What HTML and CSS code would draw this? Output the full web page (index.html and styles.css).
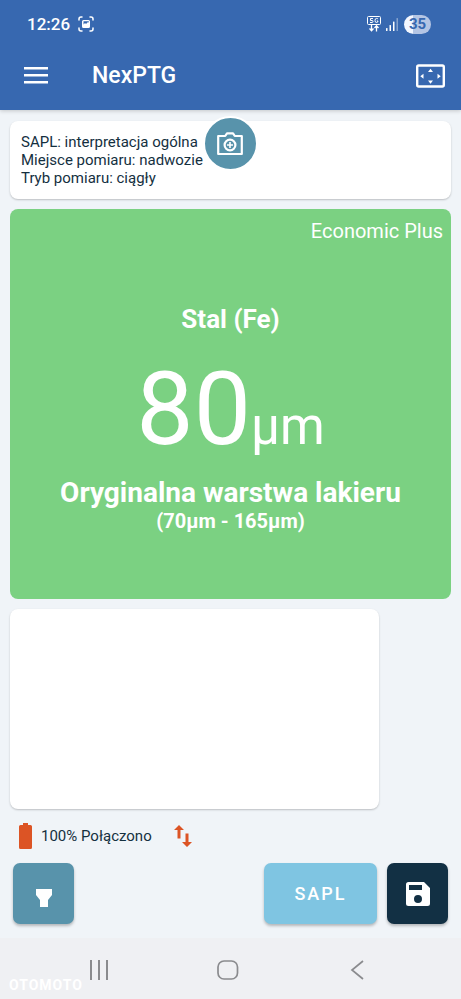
FILE: index.html
```html
<!DOCTYPE html>
<html lang="pl">
<head>
<meta charset="utf-8">
<meta name="viewport" content="width=device-width, initial-scale=1">
<title>NexPTG</title>
<link rel="stylesheet" href="styles.css">
</head>
<body>
<div class="app">
  <header class="header">
    <div class="status">
      <span class="clock">12:26</span>
      <svg class="capture" width="16" height="16" viewBox="0 0 16 16" fill="none" stroke="currentColor" stroke-width="1.500" stroke-linecap="round" aria-hidden="true">
        <path d="M1 4V3a2 2 0 0 1 2-2h1M12 1h1a2 2 0 0 1 2 2v1M15 12v1a2 2 0 0 1-2 2h-1M4 15H3a2 2 0 0 1-2-2v-1"/>
        <path d="M5.500 4h5A1.500 1.500 0 0 1 12 5.500v5a1.500 1.500 0 0 1-1.500 1.500h-5A1.500 1.500 0 0 1 4 10.500v-5A1.500 1.500 0 0 1 5.500 4zM5.500 8.500l1.500-1.500 1 1 2-2 .8.800V5.300h-5.300z" fill="currentColor" fill-rule="evenodd" stroke="none"/>
      </svg>
      <span class="spacer"></span>
      <svg width="14" height="16" viewBox="0 0 14 16" fill="none" stroke="currentColor" aria-hidden="true">
        <rect x=".5" y=".5" width="13" height="8" rx="1"/>
        <path d="M6 2.500H3.500v2h1.500q1 0 1 1t-1 1H3M11 3q-.5-.6-1.500-.6Q8 2.400 8 4.500t1.500 2q1.500 0 1.500-1.500H9.800"/>
        <path d="M4.500 9v6M2.500 12.500l2 2.200 2-2.200M9.500 15.500V10M7.500 12l2-2.200 2 2.200" stroke-width="1.300"/>
      </svg>
      <svg class="signal" width="13" height="13" viewBox="0 0 13 13" fill="currentColor" aria-hidden="true">
        <rect x="0" y="10" width="1.500" height="3" rx=".5"/>
        <rect x="3.500" y="7" width="1.500" height="6" rx=".5"/>
        <rect x="7" y="3.500" width="1.500" height="9.500" rx=".5"/>
        <rect x="10.500" y="0" width="1.500" height="13" rx=".5" opacity=".4"/>
      </svg>
      <span class="level">35</span>
    </div>
    <div class="toolbar">
      <button class="icon-button" type="button" aria-label="Menu">
        <svg width="24" height="18" viewBox="0 0 24 18" fill="currentColor" aria-hidden="true"><path d="M0 0h24v2.500H0zM0 7h24v2.500H0zM0 14h24v2.500H0z"/></svg>
      </button>
      <h1 class="title">NexPTG</h1>
      <button class="icon-button" type="button" aria-label="Pełny ekran">
        <svg width="30" height="24" viewBox="0 0 30 24" aria-hidden="true">
          <rect x="2.200" y="1.500" width="26.600" height="21" rx="1.500" fill="none" stroke="currentColor" stroke-width="2.400"/>
          <path d="M13 8h5l-2.500-3.300zM13 16.500h5l-2.500 3.300zM8.500 9.700v5L5.300 12.200zM22.500 9.700v5l3.200-2.500z" fill="currentColor"/>
        </svg>
      </button>
    </div>
  </header>

  <main class="content">
    <section class="card info">
      <p>SAPL: interpretacja ogólna</p>
      <p>Miejsce pomiaru: nadwozie</p>
      <p>Tryb pomiaru: ciągły</p>
      <button class="camera" type="button" aria-label="Zrób zdjęcie">
        <svg width="26" height="24" viewBox="0 0 26 24" fill="none" stroke="currentColor" stroke-width="2.200" aria-hidden="true">
          <path d="M1.200 4h7l1.800-2.700h6L17.800 4h7v18H1.200z" stroke-linejoin="round"/>
          <circle cx="13" cy="13" r="5.400"/>
          <path d="M13 10v6M10 13h6" stroke-width="1.600"/>
        </svg>
      </button>
    </section>

    <section class="result">
      <p class="device">Economic Plus</p>
      <h2 class="material">Stal (Fe)</h2>
      <p class="reading">80<span class="unit">µm</span></p>
      <p class="verdict">Oryginalna warstwa lakieru</p>
      <p class="range">(70µm - 165µm)</p>
    </section>

    <section class="card history" aria-label="Historia"></section>

    <div class="connection">
      <svg width="14" height="26" viewBox="0 0 14 26" fill="currentColor" aria-hidden="true"><path d="M4 0h5v2h2.500A1.500 1.500 0 0 1 13 3.500v21a1.500 1.500 0 0 1-1.500 1.500h-10A1.500 1.500 0 0 1 0 24.500v-21A1.500 1.500 0 0 1 1.500 2H4z"/></svg>
      <span class="state">100% Połączono</span>
      <svg width="18" height="24" viewBox="0 0 18 24" fill="currentColor" aria-hidden="true"><path d="M5 1l5 5H6.500v8.500h-3V6H0zM13 23l-5-5h3.500V9.500h3V18H18z"/></svg>
    </div>

    <div class="actions">
      <button class="action lamp" type="button" aria-label="Latarka">
        <svg width="16" height="18" viewBox="0 0 16 18" fill="currentColor" aria-hidden="true"><path d="M0 0h16v6l-4 5v7H4v-7L0 6z"/></svg>
      </button>
      <button class="action sapl" type="button">SAPL</button>
      <button class="action save" type="button" aria-label="Zapisz">
        <svg width="24" height="24" viewBox="0 0 24 24" fill="currentColor" fill-rule="evenodd" aria-hidden="true"><path d="M2.500 0H18l6 6v15.500a2.500 2.500 0 0 1-2.500 2.500h-19A2.500 2.500 0 0 1 0 21.500v-19A2.500 2.500 0 0 1 2.500 0zM3 3v5h13V3zM12 13a4 4 0 1 0 0 8 4 4 0 0 0 0-8z"/></svg>
      </button>
    </div>
  </main>

  <nav class="system">
    <span class="watermark">OTOMOTO</span>
    <button class="key" type="button" aria-label="Ostatnie"><svg width="20" height="20" viewBox="0 0 20 20" fill="none" stroke="currentColor" stroke-width="2" aria-hidden="true"><path d="M2 0v20M10 0v20M18 0v20"/></svg></button>
    <button class="key" type="button" aria-label="Ekran główny"><svg width="22" height="20" viewBox="0 0 22 20" fill="none" stroke="currentColor" stroke-width="1.700" aria-hidden="true"><rect x="1" y="1" width="19.500" height="18" rx="6"/></svg></button>
    <button class="key" type="button" aria-label="Wstecz"><svg width="14" height="20" viewBox="0 0 14 20" fill="none" stroke="currentColor" stroke-width="1.700" aria-hidden="true"><path d="M13 1L2 10l11 9"/></svg></button>
  </nav>
</div>
</body>
</html>
```
FILE: styles.css
```css
* { box-sizing: border-box; }

body {
  margin: 0;
  background: #f0f4f8;
  color: #14303f;
  font-family: Roboto, "Liberation Sans", sans-serif;
}

h1, h2, p { margin: 0; }

svg { display: block; flex: none; }

button {
  border: 0;
  padding: 0;
  background: none;
  color: inherit;
  font: inherit;
  display: flex;
  align-items: center;
  justify-content: center;
}

.app {
  min-height: 100vh;
  display: flex;
  flex-direction: column;
}

.header {
  background: #3768b0;
  color: #fff;
  padding-bottom: 10px;
  box-shadow: 0 1px 4px #00000030;
}

.status {
  display: flex;
  align-items: center;
  padding: 14px 30px 0 27px;
}

.clock { font-size: 17px; line-height: 20px; font-weight: 500; }
.capture { margin-left: 8px; }
.spacer { flex: 1; }
.signal { margin: 0 5px; }

.level {
  width: 27px;
  border-radius: 10px;
  background: linear-gradient(90deg, #f3f7ff 35%, #b4c5e4 35%);
  color: #3768b0;
  font-size: 15px;
  line-height: 19px;
  font-weight: 700;
  text-align: center;
}

.toolbar {
  display: flex;
  align-items: center;
  padding: 18px 16px 0 24px;
}

.icon-button { height: 48px; }

.title {
  flex: 1;
  margin-left: 44px;
  font-size: 23px;
  line-height: 28px;
  font-weight: 500;
}

.content {
  flex: 1;
  display: flex;
  flex-direction: column;
  padding: 11px 10px 14px;
}

.card {
  background: #fff;
  border-radius: 8px;
  box-shadow: 0 1px 2px #00000038;
}

.info {
  position: relative;
  padding: 12px 11px;
  font-size: 15px;
  line-height: 18px;
}

.camera {
  position: absolute;
  left: 50%;
  top: -5px;
  width: 55px;
  height: 55px;
  margin-left: -28px;
  border: 2px solid #fff;
  border-radius: 50%;
  background: #5893ab;
  color: #fff;
}

.result {
  flex: 1;
  margin: 10px 0;
  padding: 10px 8px;
  border-radius: 8px;
  background: #7bd182;
  color: #fff;
  text-align: center;
}

.device { font-size: 20px; line-height: 24px; text-align: right; }
.material { margin-top: 60px; font-size: 26px; line-height: 32px; font-weight: 700; }
.reading { margin-top: 12px; font-size: 102px; line-height: 124px; }
.unit { font-size: 51px; line-height: 60px; }
.verdict { margin-top: 6px; font-size: 28px; line-height: 32px; font-weight: 700; }
.range { font-size: 20px; line-height: 24px; font-weight: 700; }

.history { height: 200px; margin-right: 72px; }

.connection {
  display: flex;
  align-items: center;
  height: 54px;
  padding-left: 9px;
  color: #dc5425;
}

.state {
  margin: 0 22px 0 8px;
  color: #14303f;
  font-size: 15px;
  line-height: 18px;
}

.actions {
  display: flex;
  gap: 10px;
  padding: 0 3px;
}

.action {
  width: 61px;
  height: 61px;
  border-radius: 7px;
  color: #fff;
  box-shadow: 0 2px 3px #00000040;
}

.lamp { background: #5893ab; padding-top: 8px; }
.save { background: #123044; }

.sapl {
  width: 113px;
  margin-left: auto;
  background: #7fc5e2;
  font-size: 18px;
  font-weight: 500;
  letter-spacing: 2px;
}

.system {
  position: relative;
  display: flex;
  justify-content: space-around;
  padding: 2px 40px 0 34px;
  background: #eff0f3;
  color: #8a8b8e;
}

.key { height: 59px; width: 64px; }

.watermark {
  position: absolute;
  left: 9px;
  bottom: 6px;
  color: #fff;
  font-size: 14px;
  line-height: 16px;
  font-weight: 700;
  letter-spacing: 1px;
}
```
